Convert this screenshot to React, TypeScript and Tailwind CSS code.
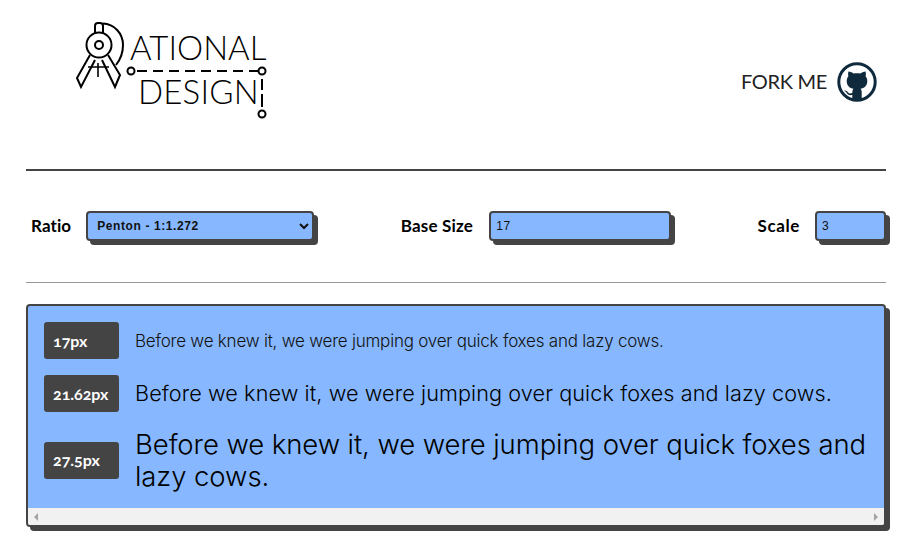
import { useState } from 'react';

const Logo = () => (
  <div className="relative w-[200px] h-[100px]">
    <svg width="200" height="100" viewBox="70 20 200 100" fill="none" stroke="#000" strokeWidth="2" className="absolute left-0 top-0">
      {/* compass */}
      <path d="M95 33 V26 a3 3 0 0 1 3 -3 h2 a3 3 0 0 1 3 3 V33" />
      <circle cx="99" cy="45" r="12.5" />
      <circle cx="99" cy="45" r="4" />
      <path d="M103 23.5 C 114 24 123 33 123 45 C 123 53 120 60 116 65" />
      <path d="M90 55 L77 78 L81 87 L95 60" />
      <path d="M108 55 L120 75 L115 87 L102 60" />
      <path d="M88 67 H109 M98 63 V77" strokeWidth="1.6" />
      {/* dashed line */}
      <circle cx="131" cy="71" r="3.5" />
      <circle cx="262" cy="71" r="3.5" />
      <path d="M137 71 H258" strokeDasharray="10 6" />
      <path d="M262 79 V90 M262 94 V107" />
      <circle cx="262" cy="114" r="3.5" />
    </svg>
    <span className="absolute left-[60px] top-[7px] text-[33px] leading-[40px] font-light text-black [font-family:'Lato',sans-serif]">ATIONAL</span>
    <span className="absolute left-[68px] top-[51px] text-[33px] leading-[40px] font-light tracking-[0.2px] text-black [font-family:'Lato',sans-serif]">DESIGN</span>
  </div>
);

const GithubMark = () => (
  <svg width="40" height="40" viewBox="0 0 40 40">
    <circle cx="20" cy="20" r="18.2" fill="none" stroke="#0f2a3c" strokeWidth="3" />
    <path
      fill="#0f2a3c"
      d="M11.5 9.5 C13.5 9.5 15.5 10.5 16.5 11.5 C18.5 11 21.5 11 23.5 11.5 C24.5 10.5 26.5 9.5 28.5 9.5 C29 11 29 13 28.6 14.2 C30 15.8 30.3 17.5 30.3 19 C30.3 24 27 26.3 23.5 26.8 C24.3 27.6 24.7 28.6 24.7 30 V37 H15.3 V33 C12 33.6 10.5 32.5 9.6 30.8 C9 29.6 7.8 29 7 28.8 C8.5 28.2 10 29 11 30.4 C12 31.6 13.5 31.6 15.3 31 C15.3 29 15.6 27.6 16.5 26.8 C13 26.3 9.7 24 9.7 19 C9.7 17.5 10 15.8 11.4 14.2 C11 13 11 11 11.5 9.5 Z"
    />
  </svg>
);

const controlClass =
  "h-[30px] bg-[#87b8ff] border-2 border-[#444] rounded-[4px] shadow-[4px_4px_0_#444] text-[12px] tracking-[0.6px] text-[#111] outline-none [font-family:'Liberation_Sans',sans-serif]";

const labelClass = 'font-bold text-[17px] text-black';

const rows = [
  { label: '17px', size: 'text-[17px] pt-[1px] leading-[36px] tracking-[-0.22px] text-[#111]' },
  { label: '21.62px', size: 'text-[21.62px] leading-[37px] tracking-[0.1px] text-black' },
  { label: '27.5px', size: 'text-[27.5px] leading-[32px] tracking-[-0.085px] text-black' },
];

export default function App() {
  const [ratio, setRatio] = useState('1.272');
  const [base, setBase] = useState('17');
  const [scale, setScale] = useState('3');

  return (
    <div className="w-[913px] h-[560px] bg-white overflow-hidden pl-[26px] pr-[27px] [font-family:'Lato',sans-serif] text-[#222]">
      <header className="h-[171px] border-b-2 border-[#444] flex items-start justify-between pl-[44px] pr-[9px]">
        <div className="pt-[20px]">
          <Logo />
        </div>
        <a className="flex items-center gap-[10px] mt-[62px] text-[20px] tracking-[-0.3px] text-[#222]">
          <span className="pb-[2px]">FORK ME</span>
          <GithubMark />
        </a>
      </header>

      <div className="h-[112px] border-b border-[#999] flex items-start justify-between pt-[40px] pl-[5px]">
        <div className="flex items-center gap-[15px]">
          <label className={`${labelClass} tracking-[0.1px]`}>Ratio</label>
          <select
            value={ratio}
            onChange={(e) => setRatio(e.target.value)}
            className={`${controlClass} w-[228px] pl-[5px] font-bold`}
          >
            <option value="1.272">Penton - 1:1.272</option>
          </select>
        </div>
        <div className="flex items-center gap-[16px]">
          <label className={`${labelClass} tracking-[0.2px]`}>Base Size</label>
          <input
            value={base}
            onChange={(e) => setBase(e.target.value)}
            className={`${controlClass} w-[182px] pl-[5px]`}
          />
        </div>
        <div className="flex items-center gap-[15px]">
          <label className={`${labelClass} tracking-[0.6px]`}>Scale</label>
          <input
            value={scale}
            onChange={(e) => setScale(e.target.value)}
            className={`${controlClass} w-[71px] pl-[5px]`}
          />
        </div>
      </div>

      <section className="mt-[21px] border-2 border-[#444] rounded-[4px] shadow-[4px_4px_0_#444] bg-[#87b8ff] overflow-hidden">
        <div className="p-4 flex flex-col gap-4">
          {rows.map((row) => (
            <div key={row.label} className="flex items-center gap-4">
              <div className="w-[75px] h-[37px] shrink-0 flex items-center pl-[9px] rounded-[3px] bg-[#444] text-white font-bold text-[16px] oldstyle-nums">
                {row.label}
              </div>
              <p className={`${row.size} font-light [font-family:'Inter',sans-serif]`}>
                Before we knew it, we were jumping over quick foxes and lazy cows.
              </p>
            </div>
          ))}
        </div>
        {/* empty horizontal scrollbar */}
        <div className="h-[17px] bg-[#f1f1f1] flex items-center justify-between px-[6px]">
          <svg width="4" height="8" viewBox="0 0 4 8"><path d="M4 0 V8 L0 4 Z" fill="#a3a3a3" /></svg>
          <svg width="4" height="8" viewBox="0 0 4 8"><path d="M0 0 V8 L4 4 Z" fill="#a3a3a3" /></svg>
        </div>
      </section>
    </div>
  );
}
